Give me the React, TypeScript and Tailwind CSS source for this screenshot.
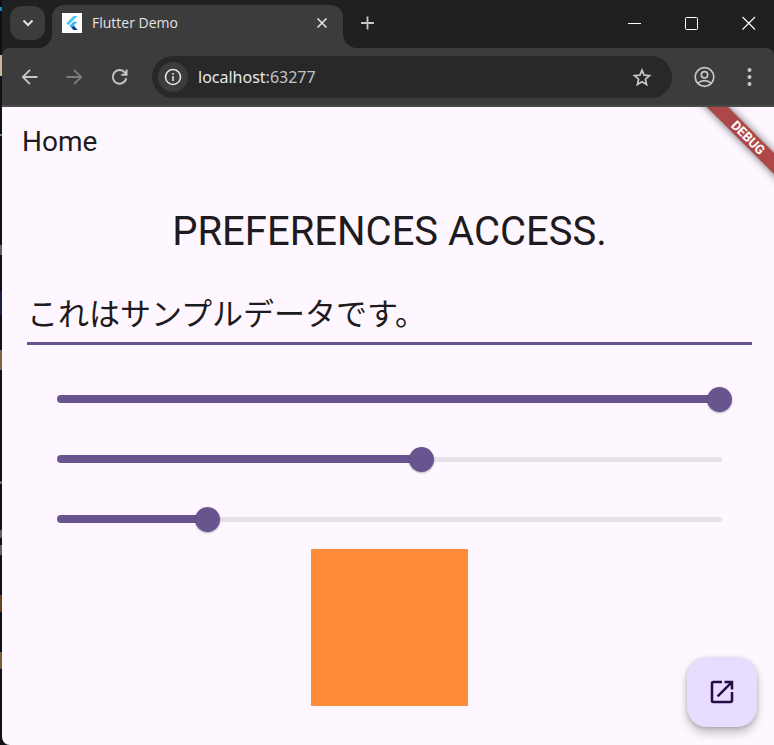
import { useState } from "react";

const stroke = {
  fill: "none",
  stroke: "currentColor",
  strokeLinecap: "butt" as const,
  strokeLinejoin: "miter" as const,
};

function FlutterMark() {
  return (
    <svg viewBox="0 0 20 20" className="size-5 shrink-0 bg-white" aria-hidden="true">
      <path d="M11.500 3H15.500L6.300 12.200 4.300 10.200z" fill="#45c8f5" />
      <path d="M11.500 8.800H15.500L11.700 12.600 9.500 14.900 7.400 12.800z" fill="#3fb4ef" />
      <path d="M9.400 14.900 11.700 12.600 15.600 17h-4z" fill="#0a3f93" />
    </svg>
  );
}

function TabStrip() {
  return (
    <header className="flex h-12 items-end bg-[#1f2120] pl-2 text-[#e3e3e3]">
      <button aria-label="Search tabs" className="mb-2 grid h-[34px] w-[35px] place-items-center rounded-xl bg-[#3c3c3c]">
        <svg viewBox="0 0 12 12" className="size-3" strokeWidth="2" {...stroke}>
          <path d="M1.500 3.500 6 8l4.500-4.500" />
        </svg>
      </button>
      <div className="relative ml-[7px] flex h-[43px] w-[291px] items-center gap-[10px] rounded-t-xl bg-[#3c3c3c] pr-[11px] pb-[7px] pl-[10px]">
        <FlutterMark />
        <span className="flex-1 text-sm">Flutter Demo</span>
        <button aria-label="Close tab" className="grid size-5 place-items-center">
          <svg viewBox="0 0 12 12" className="size-3" strokeWidth="1.600" {...stroke}>
            <path d="m1.500 1.500 9 9M10.500 1.500l-9 9" />
          </svg>
        </button>
        <svg viewBox="0 0 14 14" className="absolute right-full bottom-0 size-3.5" aria-hidden="true">
          <path d="M14 0v14H0A14 14 0 0 0 14 0" fill="#3c3c3c" />
        </svg>
        <svg viewBox="0 0 14 14" className="absolute bottom-0 left-full size-3.5" aria-hidden="true">
          <path d="M0 0v14h14A14 14 0 0 1 0 0" fill="#3c3c3c" />
        </svg>
      </div>
      <button aria-label="New tab" className="mb-[15px] ml-[14px] grid size-5 place-items-center text-[#c7c7c7]">
        <svg viewBox="0 0 14 14" className="size-3.5" strokeWidth="1.800" {...stroke}>
          <path d="M7.500 .5v13M1 7h13" />
        </svg>
      </button>
      <div className="mb-3 ml-auto flex gap-[31px] pr-3 text-white">
        <button aria-label="Minimize" className="grid size-[26px] place-items-center">
          <svg viewBox="0 0 14 14" className="size-3.5" {...stroke}>
            <path d="M0 7.500h13" />
          </svg>
        </button>
        <button aria-label="Maximize" className="grid size-[26px] place-items-center">
          <svg viewBox="0 0 14 14" className="size-3.5" {...stroke}>
            <rect x=".5" y="1.500" width="12" height="12" rx="1" />
          </svg>
        </button>
        <button aria-label="Close" className="grid size-[26px] place-items-center">
          <svg viewBox="0 0 14 14" className="size-3.5" strokeWidth="1.100" {...stroke}>
            <path d="m.5 1 12.500 12.500M13 1 .5 13.500" />
          </svg>
        </button>
      </div>
    </header>
  );
}

function Toolbar() {
  return (
    <div className="bg-[#1f2120]">
      <nav className="flex h-[59px] items-center rounded-t-lg border-b-2 border-[#4a4a4a] bg-[#3c3c3c] pr-[13px] pl-4 text-[#c7c7c7]">
        <button aria-label="Back" className="grid size-6 place-items-center">
          <svg viewBox="0 0 24 24" className="size-6" strokeWidth="1.800" {...stroke}>
            <path d="M19.500 12H5.500M12 4.800 4.800 12l7.200 7.200" />
          </svg>
        </button>
        <button aria-label="Forward" disabled className="ml-5 grid size-6 place-items-center text-[#7d7d7d]">
          <svg viewBox="0 0 24 24" className="size-6" strokeWidth="1.800" {...stroke}>
            <path d="M4.500 12H19M12 4.800l7.200 7.200-7.200 7.200" />
          </svg>
        </button>
        <button aria-label="Reload" className="ml-[22px] grid size-6 place-items-center">
          <svg viewBox="0 0 24 24" className="size-6" strokeWidth="1.900" {...stroke}>
            <path d="M18.300 13.200A6.800 6.800 0 1 1 17 7.700L18.300 9.300M18.600 4.500v5.300h-5.300" />
          </svg>
        </button>
        <div className="ml-5 flex h-[42px] min-w-0 flex-1 items-center rounded-full bg-[#282828] pr-[18px] pl-[6px]">
          <button aria-label="Site information" className="grid size-[30px] shrink-0 place-items-center rounded-full bg-[#3c3c3c] text-[#e3e3e3]">
            <svg viewBox="0 0 18 18" className="size-[18px]" strokeWidth="1.600" {...stroke}>
              <circle cx="9" cy="9" r="7.500" />
              <path d="M9 8v5M9 5v1.800" />
            </svg>
          </button>
          <p className="ml-[10px] flex-1 font-['Noto_Sans','Open_Sans',sans-serif] text-base text-[#c0c4c8]">
            <span className="text-[#e8e8e8]">localhost</span>:63277
          </p>
          <button aria-label="Bookmark this page" className="grid size-6 place-items-center">
            <svg viewBox="0 0 24 24" className="size-6" strokeWidth="1.700" {...stroke}>
              <path d="m12 5.200 2.100 5 5.400.5-4.100 3.500 1.200 5.300-4.600-2.800-4.600 2.800 1.200-5.300-4.100-3.500 5.400-.5z" />
            </svg>
          </button>
        </div>
        <button aria-label="Profile" className="ml-5 grid size-6 place-items-center">
          <svg viewBox="0 0 24 24" className="size-6" strokeWidth="1.700" {...stroke}>
            <circle cx="12.500" cy="12" r="9.300" />
            <circle cx="12.500" cy="9.800" r="3.200" />
            <path d="M6 18.200c3.800-3.400 9.200-3.400 13 0" />
          </svg>
        </button>
        <button aria-label="Menu" className="ml-[21px] grid size-6 place-items-center">
          <svg viewBox="0 0 24 24" className="size-6" fill="currentColor">
            <circle cx="12.500" cy="5" r="2" />
            <circle cx="12.500" cy="12" r="2" />
            <circle cx="12.500" cy="19" r="2" />
          </svg>
        </button>
      </nav>
    </div>
  );
}

function ColorSlider({ label, value, onChange }: { label: string; value: number; onChange: (v: number) => void }) {
  return (
    <div className="grid h-[60px] items-center px-5">
      <div className="col-start-1 row-start-1 mx-[10px] h-[5px] rounded-full bg-[#e6e0e9]" />
      <div className="col-start-1 row-start-1 mx-[10px]">
        <div className="h-2 rounded-full bg-[#68548e]" style={{ width: `${(value / 255) * 100}%` }} />
      </div>
      <input
        type="range"
        aria-label={label}
        min={0}
        max={255}
        value={value}
        onChange={(e) => onChange(Number(e.target.value))}
        className="z-10 col-start-1 row-start-1 h-[25px] w-full appearance-none bg-transparent outline-none [&::-webkit-slider-thumb]:size-[25px] [&::-webkit-slider-thumb]:appearance-none [&::-webkit-slider-thumb]:rounded-full [&::-webkit-slider-thumb]:bg-[#68548e] [&::-webkit-slider-thumb]:shadow-[0_1px_2px_rgba(0,0,0,0.3)]"
      />
    </div>
  );
}

function DebugBanner() {
  return (
    <div className="pointer-events-none absolute top-0 right-0 size-20 overflow-hidden">
      <div className="absolute top-[21px] -left-2 h-[15px] w-[120px] rotate-45 bg-[#ae4748] pl-1.5 text-center text-[13px] leading-[15px] font-bold text-white shadow-[0_0_8px_rgba(0,0,0,0.6)]">
        DEBUG
      </div>
    </div>
  );
}

function HomePage() {
  const [text, setText] = useState("これはサンプルデータです。");
  const [red, setRed] = useState(255);
  const [green, setGreen] = useState(140);
  const [blue, setBlue] = useState(57);

  return (
    <div className="relative flex-1 rounded-bl-lg bg-[#fef7ff] font-[Roboto,'Noto_Sans_CJK_JP',sans-serif] text-[#1d1b20]">
      <h1 className="flex h-[70px] items-center px-5 text-[28px]">Home</h1>
      <DebugBanner />
      <main className="flex flex-col pt-[25px] pr-[22px] pl-[25px]">
        <h2 className="text-center text-[40px] leading-[60px]">PREFERENCES ACCESS.</h2>
        <input
          type="text"
          aria-label="Sample data"
          value={text}
          onChange={(e) => setText(e.target.value)}
          className="mt-[22px] mb-6 h-[61px] w-full border-b-[3px] border-[#68548e] bg-transparent pb-1 text-[31px] outline-none"
        />
        <ColorSlider label="Red" value={red} onChange={setRed} />
        <ColorSlider label="Green" value={green} onChange={setGreen} />
        <ColorSlider label="Blue" value={blue} onChange={setBlue} />
        <div className="size-[157px] self-center" style={{ backgroundColor: `rgb(${red}, ${green}, ${blue})` }} />
      </main>
      <button
        aria-label="Open"
        className="absolute right-[17px] bottom-[18px] grid size-[70px] place-items-center rounded-[20px] bg-[#e9ddff] text-[#230f46] shadow-[0_6px_10px_rgba(0,0,0,0.22),0_1px_4px_rgba(0,0,0,0.18)]"
      >
        <svg viewBox="0 0 24 24" className="size-[30px]" fill="currentColor">
          <path d="M19 19H5V5h7V3H5a2 2 0 0 0-2 2v14a2 2 0 0 0 2 2h14c1.100 0 2-.9 2-2v-7h-2v7zM14 3v2h3.590l-9.830 9.830 1.410 1.410L19 6.410V10h2V3h-7z" />
        </svg>
      </button>
    </div>
  );
}

/* Sliver of the desktop that shows beside the window. */
function DesktopEdge() {
  return (
    <div className="flex w-0.5 shrink-0 flex-col bg-[#101116]" aria-hidden="true">
      <div className="mt-[7px] h-1 bg-[#1286c8]" />
      <div className="mt-11 h-[21px] bg-[#c9b79a]" />
      <div className="mt-[58px] h-0.5 bg-[#5f8796]" />
      <div className="mt-[109px] h-2.5 bg-[#5d6468]" />
      <div className="mt-9 h-6 bg-[#1b1d4a]" />
      <div className="mt-[35px] h-5 bg-[#7d6243]" />
      <div className="mt-[111px] h-[3px] bg-[#66686c]" />
      <div className="mt-[46px] h-2 bg-[#5f6164]" />
      <div className="mt-[7px] h-2.5 bg-[#5f6164]" />
      <div className="mt-10 h-[17px] bg-[#6b421f]" />
      <div className="mt-10 h-[17px] bg-[#7c5a38]" />
    </div>
  );
}

export default function App() {
  return (
    <div className="flex min-h-screen bg-[#101116] font-['Open_Sans','Noto_Sans',sans-serif]">
      <DesktopEdge />
      <div className="flex min-w-0 flex-1 flex-col">
        <TabStrip />
        <Toolbar />
        <HomePage />
      </div>
    </div>
  );
}
